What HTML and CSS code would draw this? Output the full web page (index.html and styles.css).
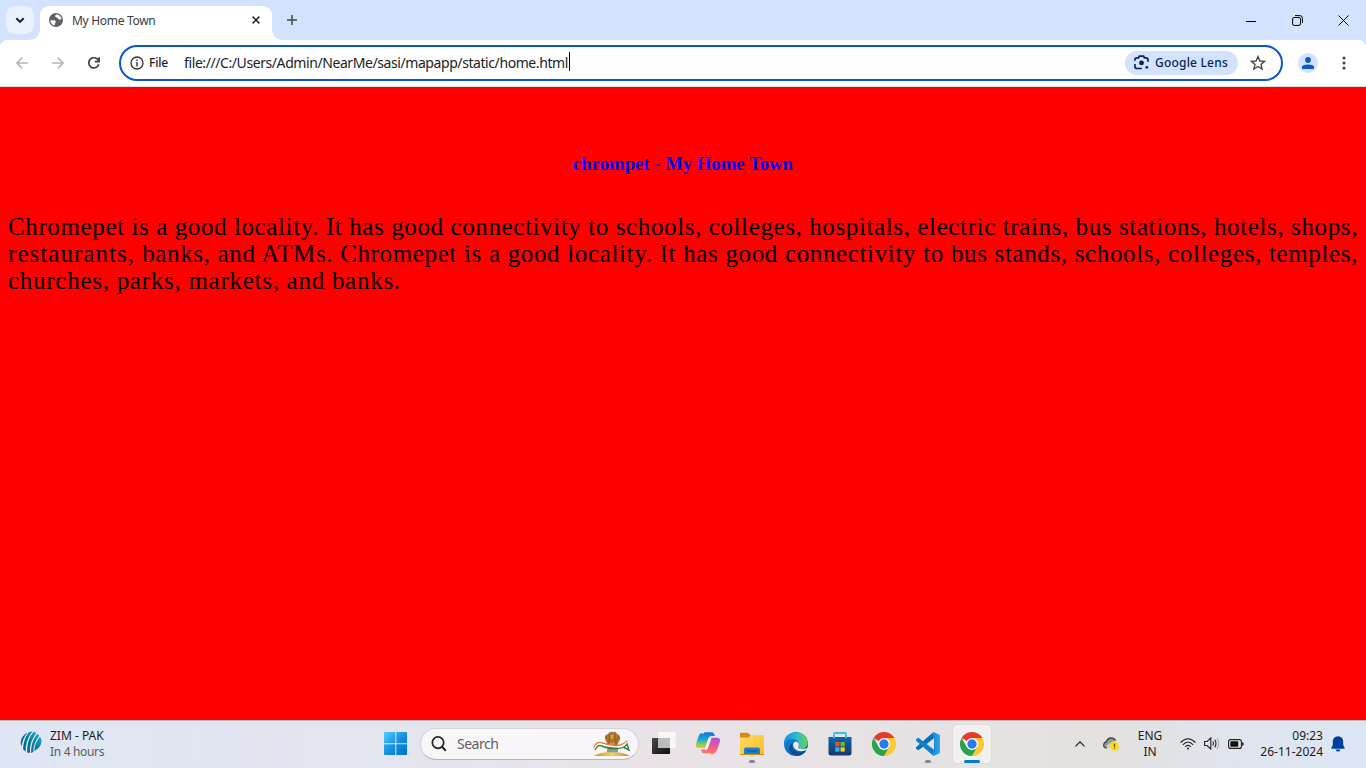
FILE: index.html
```html
<!DOCTYPE html>
<html lang="en">
<head>
<meta charset="utf-8">
<title>My Home Town</title>
<link rel="stylesheet" href="styles.css">
</head>
<body>
<svg width="0" height="0" class="defs">
  <defs>
    <linearGradient id="win" x1="0" y1="0" x2="1" y2="1"><stop offset="0" stop-color="#4fd0fb"/><stop offset=".5" stop-color="#1691e3"/><stop offset="1" stop-color="#0070cf"/></linearGradient>
    <linearGradient id="icc" x1="0" y1="1" x2="1" y2="0"><stop offset="0" stop-color="#075b98"/><stop offset=".5" stop-color="#087b96"/><stop offset="1" stop-color="#21b7ec"/></linearGradient>
    <linearGradient id="dark" x1="0" y1="0" x2="1" y2="1"><stop offset="0" stop-color="#484848"/><stop offset="1" stop-color="#101010"/></linearGradient>
    <linearGradient id="cpL" x1="0" y1="0" x2="0" y2="1"><stop offset="0" stop-color="#1672e2"/><stop offset=".45" stop-color="#16a9d3"/><stop offset=".75" stop-color="#8bc75c"/><stop offset="1" stop-color="#f4c51e"/></linearGradient>
    <linearGradient id="cpR" x1="0" y1="0" x2="0" y2="1"><stop offset="0" stop-color="#a557e5"/><stop offset=".5" stop-color="#ed5593"/><stop offset="1" stop-color="#ff8558"/></linearGradient>
    <linearGradient id="fold" x1="0" y1="0" x2="1" y2="1"><stop offset="0" stop-color="#ffdc69"/><stop offset="1" stop-color="#fdbd22"/></linearGradient>
    <linearGradient id="edgeTop" x1="0" y1="0" x2="1" y2="0"><stop offset="0" stop-color="#158cd8"/><stop offset=".5" stop-color="#29b9d8"/><stop offset="1" stop-color="#62d84e"/></linearGradient>
    <linearGradient id="edgeLow" x1="0" y1="0" x2="1" y2="1"><stop offset="0" stop-color="#158edf"/><stop offset="1" stop-color="#0b4e9c"/></linearGradient>
    <linearGradient id="store" x1="0" y1="0" x2="0" y2="1"><stop offset="0" stop-color="#0967b8"/><stop offset="1" stop-color="#183768"/></linearGradient>
    <linearGradient id="code" x1="0" y1="0" x2="1" y2="0"><stop offset="0" stop-color="#1688d2"/><stop offset="1" stop-color="#35adf0"/></linearGradient>
    <linearGradient id="gold" x1="0" y1="0" x2="1" y2="0"><stop offset="0" stop-color="#c89425"/><stop offset=".5" stop-color="#f2d267"/><stop offset="1" stop-color="#c68a22"/></linearGradient>
    <symbol id="chrome" viewBox="0 0 24 24">
      <path d="M12 12L1.6 6A12 12 0 0 1 22.4 6Z" fill="#e33b2e"/>
      <path d="M22.4 6A12 12 0 0 1 12 24L17 14.9L17.2 9L12 6Z" fill="#fcc934"/>
      <path d="M1.6 6A12 12 0 0 0 12 24L17.2 15L12 12L6.8 15Z" fill="#2ba24c"/>
      <circle cx="12" cy="12" r="6" fill="#fff"/><circle cx="12" cy="12" r="4.7" fill="#277bea"/>
    </symbol>
  </defs>
</svg>
<div class="screen">
  <header class="tabstrip">
    <div class="tab-search"><svg width="10" height="10" viewBox="0 0 10 10"><path d="M1.3 3.2L5 6.9L8.7 3.2" fill="none" stroke="#1f2024" stroke-width="2"/></svg></div>
    <div class="tab">
      <svg class="globe" width="14" height="14" viewBox="0 0 14 14"><circle cx="7" cy="7" r="7" fill="#5d6167"/><path d="M6.9 1.5C6.1 2.4 5.8 3.6 6.8 4.2C7.9 4.7 8.6 4.5 8.9 5.6C9.3 6.8 10.9 6.4 12.5 6.2C12.4 3.4 9.8 1.2 6.9 1.5ZM1.4 7.2H4.9C6.7 7.2 7.2 8.5 6.4 9.7C5.6 10.3 5.8 11.4 5.8 12.4C3.2 11.9 1.4 9.8 1.4 7.2Z" fill="#fff"/></svg>
      <span class="tab-title">My Home Town</span>
      <svg class="tab-close" width="8" height="8" viewBox="0 0 8 8"><path d="M.6.6L7.4 7.4M7.4.6L.6 7.4" stroke="#26272b" stroke-width="1.5"/></svg>
    </div>
    <svg class="new-tab" width="10" height="10" viewBox="0 0 10 10"><path d="M5 0V10M0 5H10" stroke="#45484d" stroke-width="1.5"/></svg>
    <div class="window-buttons">
      <svg class="minimize" width="10" height="11" viewBox="0 0 10 11"><path d="M0 6.5H10" stroke="#000"/></svg>
      <svg width="11" height="11" viewBox="0 0 11 11" fill="none" stroke="#000"><rect x=".6" y="2.5" width="7.9" height="7.9" rx="1.5"/><path d="M3 .6H7.8Q10.4.6 10.4 3.2V8"/></svg>
      <svg width="11" height="11" viewBox="0 0 11 11"><path d="M.5.5L10.5 10.5M10.5.5L.5 10.5" stroke="#000"/></svg>
    </div>
  </header>
  <div class="toolbar">
    <nav class="nav-buttons">
      <svg width="12" height="12" viewBox="0 0 12 12" fill="none" stroke="#b4b5b7" stroke-width="1.5"><path d="M12 6H1M6.2.6L.9 6L6.2 11.4"/></svg>
      <svg width="12" height="12" viewBox="0 0 12 12" fill="none" stroke="#b4b5b7" stroke-width="1.5"><path d="M0 6H11M5.8.6L11.1 6L5.8 11.4"/></svg>
      <svg width="12" height="12" viewBox="0 0 12 12" fill="none" stroke="#3f4247" stroke-width="1.7"><path d="M10.8 7.2A5.1 5.1 0 1 1 10.4 3.4L11 4.6M11.1.2V4.7H6.7"/></svg>
    </nav>
    <div class="omnibox">
      <svg class="info" width="14" height="14" viewBox="0 0 14 14"><circle cx="7" cy="7" r="6" fill="none" stroke="#303238" stroke-width="1.3"/><path d="M7 6V10.4M7 3.6V5" stroke="#303238" stroke-width="1.4"/></svg>
      <span class="scheme">File</span>
      <span class="url">file:///C:/Users/Admin/NearMe/sasi/mapapp/static/home.html</span><i class="caret"></i>
      <div class="lens">
        <svg width="15" height="15" viewBox="0 0 15 15" fill="none" stroke="#082457" stroke-width="1.7"><path d="M.9 5.8V4.8Q.9 2.8 2.9 2.8H4.6L5.3 1.2H9.7L10.4 2.8H12Q14 2.8 14 4.8V6.8M.9 9V11.2Q.9 13.5 3.1 13.5H7.8"/><circle cx="7.5" cy="7.9" r="2.4" fill="#082457" stroke="none"/><circle cx="12.8" cy="12.3" r="1.4" fill="#082457" stroke="none"/></svg>
        <span>Google Lens</span>
      </div>
      <svg class="star" width="16" height="16" viewBox="0 0 16 16"><path d="M8 1.6L9.9 6L14.5 6.4L11 9.4L12.1 14L8 11.5L3.9 14L5 9.4L1.5 6.4L6.1 6Z" fill="none" stroke="#45484d" stroke-width="1.4"/></svg>
    </div>
    <div class="profile"><svg width="12" height="12" viewBox="0 0 12 12"><circle cx="6" cy="3" r="2.9" fill="#0b57d0"/><path d="M0 12V10Q0 7.5 6 7.5Q12 7.5 12 10V12Z" fill="#0b57d0"/></svg></div>
    <svg class="menu" width="4" height="14" viewBox="0 0 4 14" fill="#45484d"><circle cx="2" cy="2" r="1.6"/><circle cx="2" cy="7" r="1.6"/><circle cx="2" cy="12" r="1.6"/></svg>
  </div>
  <main class="page">
    <h3 class="heading">chrompet - My Home Town</h3>
    <p class="copy"><span class="line first">Chromepet is a good locality. It has good connectivity to schools, colleges, hospitals, electric trains, bus stations, hotels, shops,</span>
    <span class="line second"><span class="wide">restaurants,</span> banks, and ATMs. Chromepet is a good locality. It has good connectivity to bus stands, schools, colleges, temples,</span>
    <span class="line last">churches, parks, markets, and banks.</span></p>
  </main>
  <footer class="taskbar">
    <div class="widget">
      <svg width="22" height="22" viewBox="0 0 22 22"><path d="M7.5 1.2Q1 5 .6 11.5L1.4 15.5Q3 7 7.5 1.2ZM12.5.5L9 1Q3.5 8 3 18L5.6 20.8Q5.3 9 12.5.5ZM16.3 2L13.8.8Q7 8 7 21.5L9.8 22Q9.5 10 16.3 2ZM19.3 4.7L17.3 2.7Q11 10 11 22L13.3 21Q13.2 12 19.3 4.7ZM20 5.8Q14.5 12 14.4 20Q21.5 16 21.5 10Q21.4 7.5 20 5.8Z" fill="url(#icc)"/></svg>
      <div class="widget-text"><span class="match">ZIM - PAK</span><span class="when">In 4 hours</span></div>
    </div>
    <div class="apps">
      <svg class="start" width="24" height="24" viewBox="0 0 24 24"><path d="M1 0H11.3V11.3H0V1Q0 0 1 0ZM12.3 0H22Q23 0 23 1V11.3H12.3ZM0 12.3H11.3V23H1Q0 23 0 22ZM12.3 12.3H23V22Q23 23 22 23H12.3Z" fill="url(#win)"/></svg>
      <div class="search">
        <svg width="16" height="16" viewBox="0 0 16 16"><circle cx="7" cy="6.6" r="5.7" fill="none" stroke="#242424" stroke-width="1.7"/><path d="M11 10.8L14.8 14.7" stroke="#242424" stroke-width="2"/></svg>
        <span>Search</span>
        <svg class="emblem" width="38" height="26" viewBox="0 0 38 26">
          <path d="M1 25Q7 21 18.5 21Q30 21 37 25Z" fill="url(#gold)"/>
          <path d="M14 18H25V21.3H14Z" fill="#92969a"/>
          <path d="M12 8Q11 4 15 3Q17 0 20 1Q23 0 24 3Q28 4 27 9L25 12L24 18H15L14 12Z" fill="#ad7930"/>
          <path d="M16 3Q18 7 16 11V17M22 3Q21 8 23 11V17M13 6L16 9M26 6L23 9" stroke="#805522" stroke-width=".8" fill="none"/><path d="M17 4H21L20 8H18ZM17 12H21V14H17Z" fill="#d1a14e"/>
          <path d="M1 17Q3 10 9 12T22 14.5T34 10" stroke="#ed7d35" stroke-width="1.5" fill="none"/><path d="M1.5 18Q4 11.5 9 13.5T22 16T34 11.5" stroke="#fff" stroke-width="1.5" fill="none"/><path d="M2 19Q5 13 9 15T22 17.5T34 13L36 19L31 16.5" stroke="#298444" stroke-width="1.4" fill="none"/>
        </svg>
      </div>
      <svg class="task-view" width="24" height="24" viewBox="0 0 24 24"><rect y="6" width="18" height="16" rx="1" fill="url(#dark)"/><rect x="6" width="17.7" height="16" rx="1" fill="#f7f7f7"/><path d="M6 6H18V16H6Z" fill="#bcbcbc"/></svg>
      <svg width="24" height="24" viewBox="0 0 24 24"><path d="M7 2Q7.7.3 9.6.3H16Q17.6.3 18.3 2.2L19 4H15.5Q13 4 12.3 6.5L9.2 16H3Q-.7 16-.1 12.8Q2 5 3.5 2.5Q4.7.3 7 2Z" fill="url(#cpL)"/><path d="M17 22Q16.3 23.5 14.3 21.3H8Q6.4 21.3 5.7 19.4L5 17.5H8.5Q11 17.5 11.7 15L14.8 5.7H21Q24.7 5.7 24 9Q22 16.5 20.5 19Q19.3 21.3 17 22Z" fill="url(#cpR)"/><path d="M12.6 6.2H15.6L11.6 17Q10.8 18 9 18L9.2 16Z" fill="#f4eef5"/></svg>
      <div class="app running"><svg width="24" height="24" viewBox="0 0 24 24"><path d="M0 1.5Q0 .7 1 .7H8L10.4 3H24V22Q24 23 23 23H1Q0 23 0 22Z" fill="#d58e0b"/><path d="M0 5.5H8.5L10.8 3H24V22H0Z" fill="url(#fold)"/><path d="M4 22V17.5Q4 15.5 6 15.5H18Q20 15.5 20 17.5V22Z" fill="#1780d0"/><path d="M7 19H17" stroke="#0b4f91"/></svg></div>
      <svg width="24" height="24" viewBox="0 0 24 24"><circle cx="12" cy="12" r="12" fill="url(#edgeLow)"/><path d="M0 11C1-2 20-4 23.6 9C25 15 18 19 14.4 16Q13.6 15.2 14.8 14C16.5 10 10 4.8 5 7.8Q1.5 9 0 13Z" fill="url(#edgeTop)"/><path d="M8 13C8 20 15 23 22.3 18C19 25 9 26 6 19C4.8 15.5 6 12 10 10Q8 11 8 13Z" fill="#0b4e98"/><path d="M11.5 9.5C15 10 15.5 12.5 14.3 14.4C13.5 16 16 18 24 16L22.5 18Q15 21 11 17C8 13.5 9 10.5 11.5 9.5Z" fill="#e8e8ed"/></svg>
      <svg width="24" height="24" viewBox="0 0 24 24"><path d="M6 6V2.2Q6 1 7.2 1H16.8Q18 1 18 2.2V6" stroke="#34bee8" stroke-width="1.8" fill="none"/><path d="M.5 5H23.5V21Q23.5 23.5 21 23.5H3Q.5 23.5.5 21Z" fill="url(#store)"/><path d="M6 5V6.2M18 5V6.2" stroke="#34bee8" stroke-width="1.8"/><path d="M7.2 10H11.5V14.3H7.2Z" fill="#f25022"/><path d="M12.5 10H16.8V14.3H12.5Z" fill="#7fba00"/><path d="M7.2 15.3H11.5V19.6H7.2Z" fill="#28b4ee"/><path d="M12.5 15.3H16.8V19.6H12.5Z" fill="#ffc61a"/></svg>
      <svg width="24" height="24"><use href="#chrome"/></svg>
      <div class="app running"><svg width="24" height="24" viewBox="0 0 24 24"><path d="M17.5 0L18 6.2L2.5 18.3L0 16.8V15.2L17.5 0Z" fill="#0a70b5"/><path d="M17.5 24L18 17.8L2.5 5.7L0 7.2V8.8Z" fill="#0b82cc"/><path d="M17.5 0L23 2.5Q24 3 24 4V20Q24 21 23 21.5L17.5 24L18 18V6Z" fill="url(#code)"/></svg></div>
      <div class="app running current"><svg width="24" height="24"><use href="#chrome"/></svg></div>
    </div>
    <div class="tray">
      <svg class="chevron" width="10" height="6" viewBox="0 0 10 6"><path d="M.5 5.4L5 .9L9.5 5.4" fill="none" stroke="#222" stroke-width="1.3"/></svg>
      <svg class="cloud" width="16" height="15" viewBox="0 0 16 15"><path d="M4 12Q.2 12 .8 8.5Q1.2 6 3.3 6Q4.6 2 8 2Q11.2 2 12.5 4.5" fill="#999" stroke="#454545" stroke-width="1.3"/><path d="M3.5 11.2Q4 7.5 7.3 7Q9 5 12 5L9 12H4Z" fill="#ccc"/><circle cx="11.5" cy="10.3" r="4.4" fill="#ffe000"/><path d="M11.5 7.8V10.8M11.5 11.7V12.8" stroke="#443c00" stroke-width="1.2"/></svg>
      <div class="language"><span>ENG</span><span>IN</span></div>
      <svg class="wifi" width="16" height="12" viewBox="0 0 16 12" fill="none" stroke="#222" stroke-width="1.1"><path d="M.5 4.5Q8-3 15.5 4.5M2.8 6.8Q8 1.3 13.2 6.8M5.1 9Q8 5.8 10.9 9"/><circle cx="8" cy="10.4" r="1" fill="#222" stroke="none"/></svg>
      <svg class="sound" width="16" height="13" viewBox="0 0 16 13" fill="none" stroke="#222" stroke-width="1.1"><path d="M.6 4.5H3L6.8 1V12L3 8.5H.6ZM8.8 4.5Q10 6.5 8.8 8.5M10.8 2.7Q13.1 6.5 10.8 10.3"/><path d="M12.9 1Q16.6 6.5 12.9 12" stroke="#aaa"/></svg>
      <svg class="battery" width="16" height="10" viewBox="0 0 16 10"><rect x=".6" y=".6" width="12.8" height="8.8" rx="2" fill="none" stroke="#222" stroke-width="1.1"/><rect x="2.3" y="2.2" width="8" height="5.6" rx=".7" fill="#111"/><path d="M14.2 3V7Q15.8 6.6 15.8 5T14.2 3Z" fill="#222"/></svg>
      <div class="clock"><span>09:23</span><span class="date">26-11-2024</span></div>
      <svg class="bell" width="14" height="16" viewBox="0 0 14 16"><path d="M7 .3Q12 .5 12.2 5.5V9L13.6 11.7V12.7H.4V11.7L1.8 9V5.5Q2 .5 7 .3ZM4.6 13.4H9.4Q8.8 15.6 7 15.6T4.6 13.4Z" fill="#003f9b"/></svg>
    </div>
  </footer>
</div>
</body>
</html>
```
FILE: styles.css
```css
* { box-sizing: border-box; }
body { margin: 0; overflow: hidden; background: #fff; color: #1b1b1b; font: 12px/16px "Noto Sans", sans-serif; }
svg { display: block; flex: none; }
span { white-space: nowrap; }
.defs { position: absolute; }
.screen { width: 1366px; height: 768px; display: flex; flex-direction: column; }
.tabstrip { height: 40px; display: flex; align-items: center; padding-left: 6px; background: #d3e2fd; flex: none; }
.tab-search { width: 28px; height: 28px; border-radius: 9px; background: #e9f0fe; display: grid; place-items: center; }
.tab { width: 232px; height: 34px; margin: 6px 0 0 6px; padding: 0 12px 6px 9px; border-radius: 9px 9px 0 0; background: #fff; display: flex; align-items: center; position: relative; }
.tab::before, .tab::after { content: ""; position: absolute; bottom: 0; width: 10px; height: 10px; }
.tab::before { left: -10px; background: radial-gradient(circle at 0 0, transparent 9.5px, #fff 10px); }
.tab::after { right: -10px; background: radial-gradient(circle at 100% 0, transparent 9.5px, #fff 10px); }
.tab-title { margin-left: 9px; padding-top: 2px; color: #3a3b3f; letter-spacing: -.3px; }
.tab-close { margin-left: auto; }
.new-tab { margin-left: 15px; }
.window-buttons { margin-left: auto; padding-right: 17px; display: flex; gap: 35px; }
.minimize { margin-right: 1px; }
.toolbar { height: 47px; padding: 0 20px 1px 16px; border-bottom: 1px solid #dedfe1; background: radial-gradient(circle at 8px 8px, #fff 8px, #d3e2fd 8.5px) 0 0 / 8px 8px no-repeat, radial-gradient(circle at 0 8px, #fff 8px, #d3e2fd 8.5px) 100% 0 / 8px 8px no-repeat, #fff; display: flex; align-items: center; flex: none; }
.nav-buttons { display: flex; gap: 24px; }
.omnibox { width: 1164px; height: 36px; margin-left: 19px; border: 2px solid #0b57d0; border-radius: 18px; padding: 0 15px 0 9px; display: flex; align-items: center; font-size: 14px; }
.scheme { margin-left: 5px; font-size: 12px; font-weight: 500; letter-spacing: -.15px; }
.url { margin-left: 16px; letter-spacing: -.42px; color: #202124; }
.caret { width: 1px; height: 19px; background: #000; margin: -3px 0 0 1px; }
.lens { width: 113px; height: 24px; margin-left: auto; border-radius: 12px; background: #d3e2fd; display: flex; align-items: center; gap: 6px; padding-left: 9px; font-size: 12px; font-weight: 500; letter-spacing: .2px; color: #082457; }
.lens span { padding-top: 1px; }
.star { margin-left: 12px; }
.profile { width: 20px; height: 20px; border-radius: 50%; background: #d3e2fd; margin-left: 15px; display: grid; place-items: center; }
.menu { margin-left: auto; }
.page { flex: 1; padding: 66px 8px 0; background: #f00; }
.heading { margin: 0; color: #00f; text-align: center; font: bold 18.72px/21px "Liberation Serif", serif; }
.copy { margin: 39px 0 0; color: #000; font: 25px/27px "Liberation Serif", serif; }
.line { display: block; text-align: justify; text-align-last: justify; }
.first { letter-spacing: .62px; word-spacing: -.5px; }
.second { letter-spacing: .63px; word-spacing: -.5px; }
.wide { letter-spacing: 1.05px; }
.last { letter-spacing: .73px; text-align-last: left; }
.taskbar { height: 48px; flex: none; padding-bottom: 2px; border-top: 1px solid #b9b9bd; background: linear-gradient(90deg, #dfe6f3 0%, #e3e5f0 25%, #e9e3e7 48%, #e5e2e2 75%, #e4e0de 80%, #dfe5ef 92%, #dce6f3 100%); display: flex; align-items: center; }
.widget { width: 384px; padding-left: 20px; display: flex; align-items: center; gap: 8px; }
.widget svg { margin-top: -3px; }
.widget-text { display: flex; flex-direction: column; }
.when { color: #5b5d62; letter-spacing: -.32px; }
.apps { display: flex; align-items: center; gap: 20px; }
.search { width: 219px; height: 32px; margin: 0 -7px 0 -8px; padding: 0 7px 0 10px; border: 1px solid #d3d2d6; border-bottom-color: #b7b6ba; border-radius: 16px; background: #f8f6f9; display: flex; align-items: center; gap: 9px; font-size: 14px; letter-spacing: -.5px; color: #606064; }
.search svg { margin-right: 1px; }
.search .emblem { margin: 0 0 0 auto; }
.app { width: 24px; height: 38px; display: grid; place-items: center; position: relative; }
.running::after { content: ""; position: absolute; left: 9px; bottom: 0; width: 6px; height: 3px; border-radius: 2px; background: #89898b; }
.current { width: 38px; margin-left: -7px; border-radius: 4px; background: #f3f1f0; box-shadow: 0 0 1px #bbb; }
.current::after { left: 11px; bottom: 0; width: 16px; background: #0078d4; }
.tray { margin-left: auto; display: flex; align-items: center; padding-right: 21px; }
.cloud { margin-left: 18px; }
.language { width: 26px; margin: 0 17px 0 18px; display: flex; flex-direction: column; align-items: center; }
.sound { margin-left: 8px; }
.battery { margin-left: 8px; }
.clock { width: 64px; margin-left: 15px; display: flex; flex-direction: column; align-items: flex-end; }
.bell { margin-left: 8px; }
```
